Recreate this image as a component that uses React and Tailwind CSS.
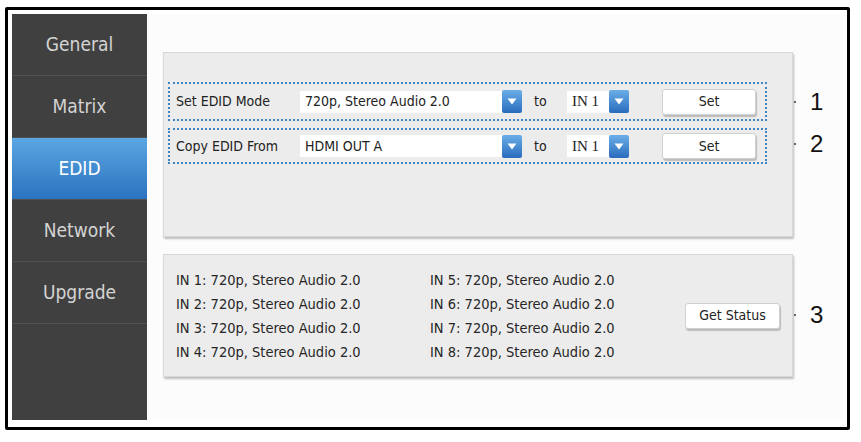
import React from "react";

const menu = ["General", "Matrix", "EDID", "Network", "Upgrade"];

const DropBtn = () => (
  <div className="flex h-[23px] w-[20px] items-center justify-center rounded-[2px] bg-gradient-to-b from-[#6aaee8] to-[#2a6cbd]">
    <svg width="10" height="7" viewBox="0 0 10 7">
      <path d="M0.5 0.5 L9.5 0.5 L5 6.5 Z" fill="#ffffff" />
    </svg>
  </div>
);

const Select = ({ value, width, serif }) => (
  <div className="flex items-center">
    <div
      className={`flex h-[22px] items-center bg-white pl-[5px] text-[14px] text-[#222] ${width} ${
        serif ? "font-['Liberation_Serif',serif] text-[15px]" : ""
      }`}
    >
      {value}
    </div>
    <DropBtn />
  </div>
);

const SetButton = () => (
  <div className="flex h-[26px] w-[94px] items-center justify-center rounded-[3px] border border-[#d0d0d0] bg-white text-[14px] text-[#222] shadow-[1px_2px_1px_rgba(0,0,0,0.2)]">
    Set
  </div>
);

const EdidRow = ({ label, value, h }) => (
  <div className={`flex items-center border-2 border-dotted border-[#3d86c6] pl-[6px] ${h}`}>
    <div className="w-[124px] text-[14px] text-[#222]">{label}</div>
    <Select value={value} width="w-[202px]" />
    <div className="w-[45px] pl-[12px] text-[14px] text-[#222]">to</div>
    <Select value="IN 1" width="w-[42px]" serif />
    <div className="ml-[33px]">
      <SetButton />
    </div>
  </div>
);

const status = [1, 2, 3, 4, 5, 6, 7, 8].map((n) => `IN ${n}: 720p, Stereo Audio 2.0`);

export default function App() {
  return (
    <div className="h-[442px] w-[861px] bg-white font-['DejaVu_Sans_Condensed','DejaVu_Sans',sans-serif]">
      <div className="ml-[5px] mt-[7px] h-[423px] w-[845px] rounded-[2px] border-[3px] border-black pb-[7px] pl-[4px] pr-[2px] pt-[4px]">
        <div className="flex h-full">
          <div className="flex w-[135px] flex-col bg-[#404040]">
            {menu.map((m) => (
              <div
                key={m}
                className={`flex h-[62px] items-center justify-center border-b border-[#505050] text-[19px] ${
                  m === "EDID"
                    ? "bg-gradient-to-b from-[#5aa6e2] to-[#2b73bf] text-white"
                    : "text-[#d4d4d4]"
                }`}
              >
                {m}
              </div>
            ))}
          </div>

          <div className="relative flex-1 bg-[#fcfcfc] pl-[16px] pt-[38px]">
            <div className="h-[185px] w-[630px] border border-[#d8d8d8] bg-[#ececec] px-[4px] pt-[29px] shadow-[1px_2px_2px_rgba(0,0,0,0.25)]">
              <div className="flex w-[599px] flex-col gap-[7px]">
                <EdidRow label="Set EDID Mode" value="720p, Stereo Audio 2.0" h="h-[39px]" />
                <EdidRow label="Copy EDID From" value="HDMI OUT A" h="h-[36px]" />
              </div>
            </div>

            <div className="mt-[17px] flex h-[123px] w-[630px] items-center border border-[#d8d8d8] bg-[#ececec] pl-[12px] pr-[12px] shadow-[1px_2px_2px_rgba(0,0,0,0.25)]">
              <div className="grid flex-1 grid-flow-col grid-cols-[254px_1fr] grid-rows-4 gap-y-[8px] text-[14.5px] leading-[16px] text-[#262626]">
                {status.map((s) => (
                  <div key={s}>{s}</div>
                ))}
              </div>
              <div className="flex h-[26px] w-[95px] items-center justify-center rounded-[3px] border border-[#d0d0d0] bg-white text-[14px] text-[#222] shadow-[1px_2px_1px_rgba(0,0,0,0.2)]">
                Get Status
              </div>
            </div>

            {[
              ["1", "top-[74px]"],
              ["2", "top-[116px]"],
              ["3", "top-[287px]"],
            ].map(([n, t]) => (
              <div key={n} className={`absolute left-[647px] flex items-center gap-[14px] ${t}`}>
                <span className="h-[2px] w-[2px] bg-[#666]" />
                <span className="font-['Liberation_Sans',Arial,sans-serif] text-[24px] leading-[28px] text-[#111]">
                  {n}
                </span>
              </div>
            ))}
          </div>
        </div>
      </div>
    </div>
  );
}
